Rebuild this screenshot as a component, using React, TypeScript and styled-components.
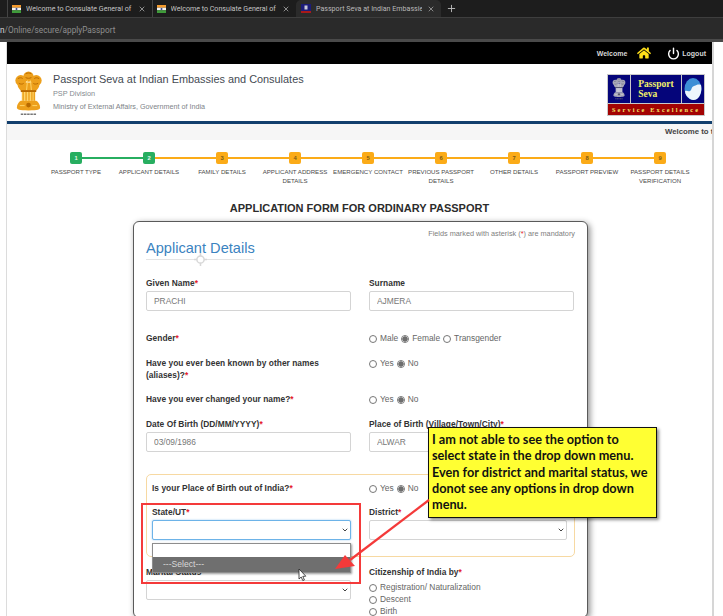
import React from 'react'
import styled, { createGlobalStyle } from 'styled-components'
import { FaHome } from 'react-icons/fa'
import { ChevronDown, Plus, Power, X } from 'lucide-react'

const GlobalStyle = createGlobalStyle`
html, body {
  margin: 0;
  padding: 0;
  background: #fff;
}
* { box-sizing: border-box; }
`

const Screen = styled.div`
width: 723px;
height: 616px;
overflow: hidden;
position: relative;
display: flex;
flex-direction: column;
background: #fff;
font-family: "Liberation Sans", Arial, sans-serif;
`

const TabStrip = styled.div`
height: 18px;
flex: none;
display: flex;
align-items: stretch;
padding-left: 7px;
background: #1d1d1d;
border-bottom: 1px solid #3e3e3e;
font-family: Roboto, sans-serif;
`

const Tab = styled.div<{ $active?: boolean }>`
width: 144.5px;
flex: none;
display: flex;
align-items: center;
gap: 5px;
padding: 0 6px 0 4px;
color: ${({ $active }) => ($active ? '#b9b9b9' : '#c4c4c4')};
background: ${({ $active }) => ($active ? '#2b2b2b' : 'transparent')};
border-left: 1px solid ${({ $active }) => ($active ? 'transparent' : '#444')};
border-radius: ${({ $active }) => ($active ? '5px 5px 0 0' : '0')};
`

const TabTitle = styled.span`
flex: 1;
overflow: hidden;
white-space: nowrap;
font-size: 7.1px;
`

const NewTab = styled.div`
display: flex;
align-items: center;
margin-left: 5px;
color: #bdbdbd;
`

const AddressBar = styled.div`
height: 24px;
flex: none;
display: flex;
align-items: center;
padding-top: 2px;
background: #2a2a2a;
border-bottom: 3px solid #4a4a4a;
font-family: Roboto, sans-serif;
font-size: 8.25px;
color: #8f8f8f;
white-space: nowrap;
overflow: hidden;
`

const HostEnd = styled.span`
color: #d8d8d8;
`

const Page = styled.div`
flex: 1;
width: 708px;
margin-left: 6px;
background: #fff;
border-left: 1px solid #dcdcdc;
border-right: 2px solid #d6d6d6;
display: flex;
flex-direction: column;
min-height: 0;
`

const TopBar = styled.div`
height: 22px;
flex: none;
background: #000;
display: flex;
align-items: center;
justify-content: flex-end;
padding-right: 6px;
color: #d6d6d6;
font-size: 7px;
font-weight: bold;
`

const HomeLink = styled.span`
display: flex;
margin: 0 16px 0 10px;
color: #ffe01a;
`

const LogoutLink = styled.span`
display: flex;
align-items: center;
gap: 2px;
`

const MastHead = styled.header`
height: 57px;
flex: none;
display: flex;
align-items: flex-start;
padding: 6px 7px 0 7px;
`

const MastText = styled.div`
flex: 1;
margin-left: 10px;
padding-top: 2px;
`

const SiteTitle = styled.div`
font-size: 10.9px;
line-height: 14px;
color: #444a52;
`

const SiteSub = styled.div`
margin-top: 3px;
font-size: 7.3px;
line-height: 10px;
color: #858a90;
`

const SiteMinistry = styled(SiteSub)`
margin-top: 3px;
font-size: 7.2px;
color: #7e8388;
`

const SevaLogo = styled.div`
width: 98px;
height: 42px;
margin-top: 4px;
padding: 1px;
background: #c9c9c9;
display: flex;
flex-direction: column;
gap: 1px;
`

const SevaTop = styled.div`
flex: 1;
display: grid;
grid-template-columns: 22px 1fr 22px;
gap: 1px;
`

const SevaCell = styled.div`
background: #05057a;
display: flex;
flex-direction: column;
align-items: center;
justify-content: center;
color: #f2f26a;
font-family: "Liberation Serif", serif;
font-weight: bold;
font-size: 9.5px;
line-height: 10px;
`

const SevaStrip = styled.div`
height: 11px;
background: #a30303;
color: #f2e76a;
font-family: "Liberation Serif", serif;
font-weight: bold;
font-size: 6.3px;
letter-spacing: 2.15px;
text-align: center;
line-height: 11px;
white-space: nowrap;
`

const BlueRule = styled.div`
height: 3px;
flex: none;
background: #123f6d;
`

const Ticker = styled.div`
height: 16px;
flex: none;
background: #f6f6f6;
color: #444;
font-size: 7.8px;
font-weight: bold;
line-height: 15px;
padding-left: 658px;
white-space: nowrap;
overflow: hidden;
`

const Stepper = styled.ol`
list-style: none;
margin: 12px 0 0 32.5px;
padding: 0;
display: flex;
width: 657px;
height: 40px;
flex: none;
`

const Step = styled.li<{ $line?: string }>`
width: 73px;
position: relative;
display: flex;
flex-direction: column;
align-items: center;
&::before {
  content: '';
  display: ${({ $line }) => ($line ? 'block' : 'none')};
  position: absolute;
  top: 5px;
  left: -36px;
  width: 73px;
  height: 1.5px;
  background: ${({ $line }) => $line};
}
`

const StepBox = styled.span<{ $done: boolean }>`
width: 12px;
height: 12px;
position: relative;
z-index: 1;
border-radius: 2px;
background: ${({ $done }) => ($done ? '#27ae60' : '#fbab18')};
color: ${({ $done }) => ($done ? '#e8f7ee' : '#7a5a18')};
font-size: 5.8px;
font-weight: bold;
line-height: 12px;
text-align: center;
`

const StepLabel = styled.span`
margin-top: 4px;
width: 72px;
font-size: 6.1px;
line-height: 8.6px;
color: #4a4a4a;
text-align: center;
`

const FormTitle = styled.h1`
margin: 9px 0 0;
flex: none;
text-align: center;
font-size: 11px;
line-height: 14px;
font-weight: bold;
color: #2c2c2c;
`

const Card = styled.section`
width: 455px;
flex: none;
margin: 6px 0 0 126px;
padding: 7px 12px 0;
border: 1px solid #5a5a5a;
border-radius: 6px;
background: #fff;
box-shadow: 2px 2px 6px rgba(0, 0, 0, .45);
`

const Mandatory = styled.div`
text-align: right;
font-size: 7.3px;
line-height: 9px;
color: #808080;
`

const Req = styled.span`
color: #e5202b;
`

const CardHeading = styled.h2`
margin: 1px 0 0;
width: 108px;
font-size: 14.6px;
font-weight: normal;
line-height: 19px;
white-space: nowrap;
color: #3b83c0;
`

const HeadingRule = styled.div`
width: 108px;
height: 1px;
margin-top: 1px;
position: relative;
background: #e4e4e4;
display: flex;
justify-content: center;
`

const Row = styled.div<{ $top: number }>`
display: grid;
grid-template-columns: 205px 205px;
column-gap: 18px;
margin-top: ${({ $top }) => $top}px;
`

const FieldLabel = styled.label`
display: block;
font-size: 8.4px;
line-height: 12px;
font-weight: bold;
letter-spacing: .03px;
color: #333;
`

const TextBox = styled.input`
display: block;
width: 205px;
height: 20px;
margin-top: 2px;
padding: 0 7px;
border: 1px solid #d4d4d4;
border-radius: 2px;
background: #fff;
color: #777;
font: 8.4px "Liberation Sans", Arial, sans-serif;
`

const SelectWrap = styled.div`
position: relative;
margin-top: 2px;
height: 20px;
color: #444;
& > svg {
  position: absolute;
  right: 2px;
  top: 6px;
  pointer-events: none;
}
`

const SelectBox = styled.select<{ $focus?: boolean }>`
appearance: none;
display: block;
width: 100%;
height: 20px;
padding: 0 3px;
border: 1px solid ${({ $focus }) => ($focus ? '#6db3e8' : '#d4d4d4')};
border-radius: 2px;
background: #fff;
box-shadow: ${({ $focus }) => ($focus ? '0 0 2px rgba(102, 175, 233, .7)' : 'none')};
font-size: 8px;
`

const RadioGroup = styled.div`
display: flex;
align-items: center;
column-gap: 3px;
height: 12px;
`

const RadioLabel = styled.label`
display: inline-flex;
align-items: center;
gap: 3px;
height: 12px;
font-size: 8.4px;
color: #666;
white-space: nowrap;
`

const RadioDot = styled.input.attrs({ type: 'radio', readOnly: true })`
appearance: none;
width: 8px;
height: 8px;
margin: 1px 0 0;
flex: none;
border: 1px solid #777;
border-radius: 50%;
background: #fff;
&:checked {
  background: radial-gradient(circle, #6e6e6e 0 2.4px, #fff 2.9px);
}
`

const OutOfIndia = styled.div`
width: 429px;
height: 83px;
margin-top: 22px;
padding: 7px 5px 0;
border: 1px solid #f7d9a2;
border-radius: 5px;
`

const InnerRow = styled.div<{ $top: number }>`
display: grid;
grid-template-columns: 199px 198px;
column-gap: 18px;
margin-top: ${({ $top }) => $top}px;
`

const CitizenOptions = styled.div`
margin-top: 3px;
display: flex;
flex-direction: column;
`

const SelectPopup = styled.div`
position: absolute;
left: 152px;
top: 543px;
width: 199px;
height: 30px;
display: flex;
flex-direction: column;
justify-content: flex-end;
background: #fff;
border: 1px solid #8d8d8d;
box-shadow: 1px 1px 2px rgba(0, 0, 0, .4);
`

const PopupOption = styled.div`
height: 15px;
padding-left: 10px;
background: #6f6f6f;
color: #d8d8d8;
font-size: 8.6px;
line-height: 15px;
`

const RedFrame = styled.div`
position: absolute;
left: 141px;
top: 503px;
width: 220px;
height: 81px;
border: 2px solid #f43a3a;
`

const Callout = styled.div`
position: absolute;
left: 428px;
top: 427px;
width: 229px;
height: 91px;
padding: 3px 3px 0;
border: 1px solid #111;
background: #ffff33;
box-shadow: 2px 2px 3px rgba(0, 0, 0, .45);
color: #111;
font-family: Lato, sans-serif;
font-weight: bold;
font-size: 12.7px;
line-height: 16.3px;
`

const Overlay = styled.svg`
position: absolute;
left: 0;
top: 0;
pointer-events: none;
`

const IndiaFlag = () => (
  <svg width="9" height="8" viewBox="0 0 9 8">
    <rect width="9" height="2.7" fill="#f39a2d" />
    <rect y="2.7" width="9" height="2.6" fill="#f4f4f4" />
    <rect y="5.3" width="9" height="2.7" fill="#3f9b3a" />
    <circle cx="4.5" cy="4" r="1" fill="#2b3f8c" />
  </svg>
)

const SevaFavicon = () => (
  <svg width="10" height="9" viewBox="0 0 10 9">
    <rect width="10" height="7" fill="#1c1c78" />
    <rect x="3.5" y="1.5" width="3" height="4" fill="#c9c9d8" />
    <rect y="7" width="10" height="2" fill="#a81a1a" />
  </svg>
)

// national emblem: three lion heads over the abacus and a flared base
const Emblem = ({ tone, dark, light, width, height }: { tone: string; dark: string; light: string; width: number; height: number }) => (
  <svg width={width} height={height} viewBox="0 0 30 48">
    <circle cx="15" cy="6" r="5.4" fill={tone} />
    <circle cx="7" cy="10" r="5.6" fill={tone} />
    <circle cx="23" cy="10" r="5.6" fill={tone} />
    <path d="M4 12c-1 4 1 7 4 9h14c3-2 5-5 4-9z" fill={tone} />
    <path d="M12 3c2-1 4-1 6 0M12 7c2 1 4 1 6 0M4 8c2-1 4-1 5 0M21 8c1-1 3-1 5 0M5 13c2 1 4 1 5 0M20 13c1 1 3 1 5 0" stroke={dark} strokeWidth="1" fill="none" />
    <path d="M14 10l-1 10M17 10l1 10" stroke={light} strokeWidth="1" />
    <rect x="7" y="20" width="16" height="2" fill={dark} />
    <rect x="8" y="22" width="14" height="9" fill={light} />
    <path d="M9.5 22v9M12.5 22v9M15.5 22v9M18.5 22v9M21 22v9" stroke={tone} strokeWidth="1.4" />
    <path d="M7 31h16c2 1 4 4 4 7 0 2-2 3-12 3S3 40 3 38c0-3 2-6 4-7z" fill={tone} />
    <circle cx="15" cy="35.5" r="2.4" fill={dark} />
    <path d="M6 36h5M19 36h5" stroke={light} strokeWidth="1" />
    <path d="M7 45h16" stroke="#777" strokeWidth="1.6" strokeDasharray="2.6 .7" />
  </svg>
)

const Globe = () => (
  <svg width="18" height="24" viewBox="0 0 18 24">
    <ellipse cx="9" cy="12" rx="8.5" ry="11" fill="#3d8fd6" />
    <path d="M1 14c2-1 3 1 5 0s1-4 4-5 4-2 7-1c1 5 0 11-4 14-2 1.300-5 1.300-7 0-3-2-5-5-5-8z" fill="#eef6fc" />
  </svg>
)

const Radio = ({ label, checked }: { label: string; checked?: boolean }) => (
  <RadioLabel>
    <RadioDot checked={!!checked} onChange={() => undefined} />
    {label}
  </RadioLabel>
)

const YesNo = () => (
  <RadioGroup>
    <Radio label="Yes" />
    <Radio label="No" checked />
  </RadioGroup>
)

const Dropdown = ({ focus }: { focus?: boolean }) => (
  <SelectWrap>
    <SelectBox $focus={focus} />
    <ChevronDown size={8} strokeWidth={3} />
  </SelectWrap>
)

const steps = [
  'PASSPORT TYPE',
  'APPLICANT DETAILS',
  'FAMILY DETAILS',
  'APPLICANT ADDRESS DETAILS',
  'EMERGENCY CONTACT',
  'PREVIOUS PASSPORT DETAILS',
  'OTHER DETAILS',
  'PASSPORT PREVIEW',
  'PASSPORT DETAILS VERIFICATION',
]

const App: React.FC = () => (
  <Screen>
    <GlobalStyle />
    <TabStrip>
      <Tab>
        <IndiaFlag />
        <TabTitle>Welcome to Consulate General of</TabTitle>
        <X size={8} />
      </Tab>
      <Tab>
        <IndiaFlag />
        <TabTitle>Welcome to Consulate General of</TabTitle>
        <X size={8} />
      </Tab>
      <Tab $active>
        <SevaFavicon />
        <TabTitle>Passport Seva at Indian Embassies</TabTitle>
        <X size={8} />
      </Tab>
      <NewTab>
        <Plus size={11} />
      </NewTab>
    </TabStrip>
    <AddressBar>
      <HostEnd>n</HostEnd>/Online/secure/applyPassport
    </AddressBar>

    <Page>
      <TopBar>
        Welcome
        <HomeLink>
          <FaHome size={14} />
        </HomeLink>
        <LogoutLink>
          <Power size={13} strokeWidth={2.6} color="#fff" />
          Logout
        </LogoutLink>
      </TopBar>

      <MastHead>
        <Emblem tone="#eda01c" dark="#b86a00" light="#ffd66a" width={29} height={48} />
        <MastText>
          <SiteTitle>Passport Seva at Indian Embassies and Consulates</SiteTitle>
          <SiteSub>PSP Division</SiteSub>
          <SiteMinistry>Ministry of External Affairs, Government of India</SiteMinistry>
        </MastText>
        <SevaLogo>
          <SevaTop>
            <SevaCell>
              <Emblem tone="#a9a9b8" dark="#55556a" light="#dcdce6" width={14} height={24} />
            </SevaCell>
            <SevaCell>
              Passport
              <br />
              Seva
            </SevaCell>
            <SevaCell>
              <Globe />
            </SevaCell>
          </SevaTop>
          <SevaStrip>Service Excellence</SevaStrip>
        </SevaLogo>
      </MastHead>
      <BlueRule />
      <Ticker>Welcome to the Passport Seva</Ticker>

      <Stepper>
        {steps.map((name, i) => (
          <Step key={name} $line={i === 0 ? undefined : i === 1 ? '#27ae60' : '#fbab18'}>
            <StepBox $done={i < 2}>{i + 1}</StepBox>
            <StepLabel>{name}</StepLabel>
          </Step>
        ))}
      </Stepper>

      <FormTitle>APPLICATION FORM FOR ORDINARY PASSPORT</FormTitle>

      <Card>
        <Mandatory>
          Fields marked with asterisk (<Req>*</Req>) are mandatory
        </Mandatory>
        <CardHeading>Applicant Details</CardHeading>
        <HeadingRule>
          <svg width="13" height="13" viewBox="0 0 13 13" style={{ marginTop: -6 }}>
            <circle cx="6.5" cy="6.5" r="3.6" fill="#fff" stroke="#d8d8d8" strokeWidth="1.5" />
            <path d="M6.5 0v3M6.5 10v3M0 6.5h3M10 6.5h3" stroke="#d8d8d8" strokeWidth="1.5" />
          </svg>
        </HeadingRule>

        <Row $top={17}>
          <div>
            <FieldLabel>
              Given Name<Req>*</Req>
            </FieldLabel>
            <TextBox readOnly value="PRACHI" />
          </div>
          <div>
            <FieldLabel>Surname</FieldLabel>
            <TextBox readOnly value="AJMERA" />
          </div>
        </Row>

        <Row $top={21}>
          <FieldLabel>
            Gender<Req>*</Req>
          </FieldLabel>
          <RadioGroup>
            <Radio label="Male" />
            <Radio label="Female" checked />
            <Radio label="Transgender" />
          </RadioGroup>
        </Row>

        <Row $top={13}>
          <FieldLabel>
            Have you ever been known by other names (aliases)?<Req>*</Req>
          </FieldLabel>
          <YesNo />
        </Row>

        <Row $top={12}>
          <FieldLabel>
            Have you ever changed your name?<Req>*</Req>
          </FieldLabel>
          <YesNo />
        </Row>

        <Row $top={13}>
          <div>
            <FieldLabel>
              Date Of Birth (DD/MM/YYYY)<Req>*</Req>
            </FieldLabel>
            <TextBox readOnly value="03/09/1986" />
          </div>
          <div>
            <FieldLabel>
              Place of Birth (Village/Town/City)<Req>*</Req>
            </FieldLabel>
            <TextBox readOnly value="ALWAR" />
          </div>
        </Row>

        <OutOfIndia>
          <InnerRow $top={0}>
            <FieldLabel>
              Is your Place of Birth out of India?<Req>*</Req>
            </FieldLabel>
            <YesNo />
          </InnerRow>
          <InnerRow $top={12}>
            <div>
              <FieldLabel>
                State/UT<Req>*</Req>
              </FieldLabel>
              <Dropdown focus />
            </div>
            <div>
              <FieldLabel>
                District<Req>*</Req>
              </FieldLabel>
              <Dropdown />
            </div>
          </InnerRow>
        </OutOfIndia>

        <Row $top={9}>
          <div>
            <FieldLabel>
              Marital Status<Req>*</Req>
            </FieldLabel>
            <Dropdown />
          </div>
          <div>
            <FieldLabel>
              Citizenship of India by<Req>*</Req>
            </FieldLabel>
            <CitizenOptions>
              <Radio label="Registration/ Naturalization" />
              <Radio label="Descent" />
              <Radio label="Birth" />
            </CitizenOptions>
          </div>
        </Row>
      </Card>
    </Page>

    <SelectPopup>
      <PopupOption>---Select---</PopupOption>
    </SelectPopup>
    <RedFrame />
    <Callout>
      I am not able to see the option to select state in the drop down menu. Even for district and marital status, we
      donot see any options in drop down menu.
    </Callout>
    <Overlay width="723" height="616" viewBox="0 0 723 616">
      <path d="M429 500 L350 560" stroke="#f43a3a" strokeWidth="2.2" fill="none" />
      <path d="M335 569 L345 555 L355 566 Z" fill="#f43a3a" />
      <path
        d="M299 569 v10 l2.2-2 1.6 3.6 1.6-.7-1.6-3.5 3-.2 z"
        fill="#fff"
        stroke="#222"
        strokeWidth=".8"
      />
    </Overlay>
  </Screen>
)

export default App
